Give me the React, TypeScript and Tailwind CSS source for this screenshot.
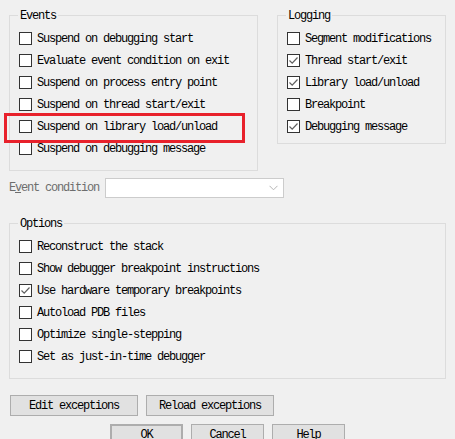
import React from 'react';

const FONT = { fontFamily: '"Liberation Mono", "DejaVu Sans Mono", monospace' };

function Box({ checked }: { checked?: boolean }) {
  return (
    <span className="w-[13px] h-[13px] shrink-0 border border-[#333333] bg-white flex items-center justify-center">
      {checked && (
        <svg width="11" height="11" viewBox="0 0 11 11">
          <path d="M1.5 5.5 L4.2 8.2 L9.5 2.5" fill="none" stroke="#5f5f5f" strokeWidth="1.2" />
        </svg>
      )}
    </span>
  );
}

function Check({ label, checked }: { label: string; checked?: boolean }) {
  return (
    <div className="h-[22px] flex items-start pt-[4px]">
      <Box checked={checked} />
      <span className="ml-[5px] mt-[1px] text-[12px] leading-[13px] tracking-[-1.2px] text-black whitespace-nowrap">
        {label}
      </span>
    </div>
  );
}

function Group({ title, className, children }: { title: string; className: string; children: React.ReactNode }) {
  return (
    <div className={`relative border border-[#dcdcdc] ${className}`}>
      <span className="absolute left-[8px] top-[-7px] px-[2px] bg-[#f0f0f0] text-[12px] leading-[14px] tracking-[-1.2px] text-black">
        {title}
      </span>
      <div className="pt-[12px] pl-[9px]">{children}</div>
    </div>
  );
}

function Btn({ label, className }: { label: string; className: string }) {
  return (
    <div
      className={`h-[21px] flex items-center justify-center bg-[#e1e1e1] border border-[#adadad] text-[12px] tracking-[-1.2px] text-black ${className}`}
    >
      {label}
    </div>
  );
}

export default function App() {
  return (
    <div className="w-[455px] h-[439px] bg-[#f0f0f0] overflow-hidden relative" style={FONT}>
      <div className="flex pt-[15px] pl-[9px]">
        <Group title="Events" className="w-[249px] h-[156px]">
          <Check label="Suspend on debugging start" />
          <Check label="Evaluate event condition on exit" />
          <Check label="Suspend on process entry point" />
          <Check label="Suspend on thread start/exit" />
          <Check label="Suspend on library load/unload" />
          <Check label="Suspend on debugging message" />
        </Group>
        <Group title="Logging" className="ml-[19px] w-[169px] h-[129px]">
          <Check label="Segment modifications" />
          <Check label="Thread start/exit" checked />
          <Check label="Library load/unload" checked />
          <Check label="Breakpoint" />
          <Check label="Debugging message" checked />
        </Group>
      </div>

      {/* highlight */}
      <div className="absolute left-[4px] top-[113px] w-[241px] h-[30px] border-[3px] border-[#e8212b]" />

      <div className="flex items-center pl-[9px] mt-[7px]">
        <span className="w-[96px] text-[12px] tracking-[-1.2px] text-[#6d6d6d]">
          E<span className="underline">v</span>ent condition
        </span>
        <div className="w-[179px] h-[20px] bg-white border border-[#cccccc] flex items-center justify-end pr-[5px]">
          <svg width="9" height="6" viewBox="0 0 9 6">
            <path d="M0.5 0.8 L4.5 4.8 L8.5 0.8" fill="none" stroke="#b5b5b5" strokeWidth="1" />
          </svg>
        </div>
      </div>

      <div className="pl-[9px] mt-[25px]">
        <Group title="Options" className="w-[437px] h-[156px]">
          <Check label="Reconstruct the stack" />
          <Check label="Show debugger breakpoint instructions" />
          <Check label="Use hardware temporary breakpoints" checked />
          <Check label="Autoload PDB files" />
          <Check label="Optimize single-stepping" />
          <Check label="Set as just-in-time debugger" />
        </Group>
      </div>

      <div className="flex gap-[8px] pl-[10px] mt-[16px]">
        <Btn label="Edit exceptions" className="w-[128px]" />
        <Btn label="Reload exceptions" className="w-[128px]" />
      </div>

      <div className="flex gap-[8px] pl-[110px] mt-[8px]">
        <Btn label="OK" className="w-[73px] border-2 border-[#0078d7]" />
        <Btn label="Cancel" className="w-[73px]" />
        <Btn label="Help" className="w-[73px]" />
      </div>
    </div>
  );
}
